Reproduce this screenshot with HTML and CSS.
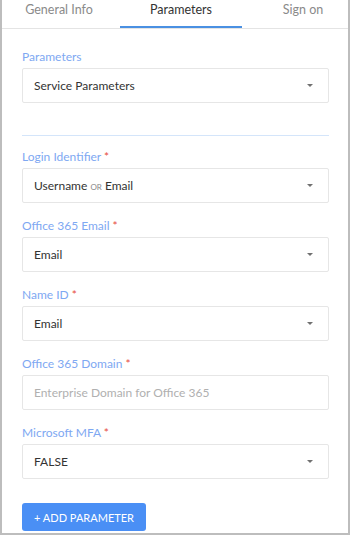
FILE: index.html
```html
<!DOCTYPE html>
<html lang="en">
<head>
    <meta charset="UTF-8">
    <meta name="viewport" content="width=device-width, initial-scale=1.0">
    <title>Parameters</title>
    <link rel="stylesheet" href="styles.css">
</head>
<body>
    <div class="panel">
        <div class="tabs">
            <div class="tab">General Info</div>
            <div class="tab active">Parameters</div>
            <div class="tab">Sign on</div>
        </div>

        <div class="content">
            <div class="field">
                <label class="label">Parameters</label>
                <div class="select">
                    <span>Service Parameters</span>
                    <span class="caret"></span>
                </div>
            </div>

            <hr class="divider">

            <div class="field">
                <label class="label">Login Identifier <span class="req">*</span></label>
                <div class="select">
                    <span>Username <small class="or">OR</small> Email</span>
                    <span class="caret"></span>
                </div>
            </div>

            <div class="field">
                <label class="label">Office 365 Email <span class="req">*</span></label>
                <div class="select">
                    <span>Email</span>
                    <span class="caret"></span>
                </div>
            </div>

            <div class="field">
                <label class="label">Name ID <span class="req">*</span></label>
                <div class="select">
                    <span>Email</span>
                    <span class="caret"></span>
                </div>
            </div>

            <div class="field">
                <label class="label">Office 365 Domain <span class="req">*</span></label>
                <input class="input" type="text" placeholder="Enterprise Domain for Office 365">
            </div>

            <div class="field">
                <label class="label">Microsoft MFA <span class="req">*</span></label>
                <div class="select">
                    <span>FALSE</span>
                    <span class="caret"></span>
                </div>
            </div>

            <button class="add-btn">+ ADD PARAMETER</button>
        </div>
    </div>
</body>
</html>
```

FILE: styles.css
```css
body {
    margin: 0;
    font-family: Lato, 'Noto Sans', sans-serif;
    font-size: 12px;
    color: #333;
    background: #fff;
}
.panel {
    width: 350px;
    height: 535px;
    box-sizing: border-box;
    border: 2px solid #bdbdbd;
    border-top: none;
    overflow: hidden;
}
/* Tabs */
.tabs {
    display: flex;
    height: 28px;
    margin-left: -4px;
    border-bottom: 1px solid #e4e4e4;
}
.tab {
    flex: 0 0 122px;
    box-sizing: border-box;
    text-align: center;
    padding-top: 2px;
    line-height: 16px;
    font-size: 12.5px;
    color: #8a8a8a;
}
.tab.active {
    color: #333;
    border-bottom: 2px solid #4a90e2;
}
/* Form */
.content {
    padding: 20px 19px 0 20px;
}
.field {
    margin-bottom: 15px;
}
.label {
    display: block;
    line-height: 16px;
    margin-bottom: 3px;
    color: #7ea8f2;
    font-size: 12px;
}
.req {
    color: #e74c3c;
}
.select, .input {
    display: flex;
    align-items: center;
    justify-content: space-between;
    box-sizing: border-box;
    width: 100%;
    height: 35px;
    padding: 0 15px 0 11px;
    border: 1px solid #e6e6e6;
    border-radius: 2px;
    background: #fff;
    font-family: inherit;
    font-size: 12px;
    color: #333;
}
.input::placeholder {
    color: #b0b0b0;
}
.or {
    font-size: 8px;
    color: #888;
}
.caret {
    width: 0;
    height: 0;
    border-left: 3.5px solid transparent;
    border-right: 3.5px solid transparent;
    border-top: 3.5px solid #707070;
}
.divider {
    border: none;
    height: 1px;
    background: #d4e5fa;
    margin: 32px 0 13px;
}
.add-btn {
    margin-top: 9px;
    height: 28px;
    width: 124px;
    border: none;
    border-radius: 3px;
    background: #4a8ff5;
    color: #fff;
    font-family: inherit;
    font-size: 11px;
    padding: 0;
}
```
